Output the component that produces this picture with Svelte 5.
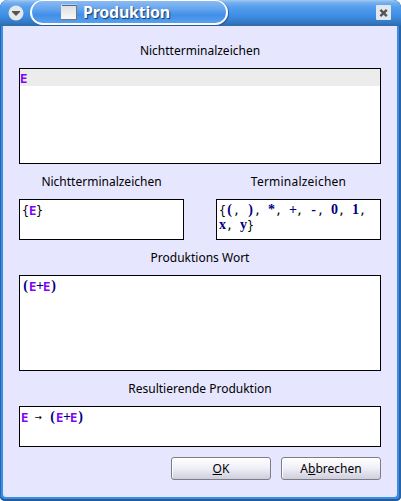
<script>
  const terminals = ['(', ')', '*', '+', '-', '0', '1', 'x', 'y'];
  const sep = ', ';
</script>

<div class="window">
  <header>
    <svg class="menu" width="16" height="16" viewBox="0 0 16 16">
      <circle cx="8" cy="8" r="7.5" fill="#e4e8ed" />
      <path d="M4 6h8v1l-4 4-4-4z" fill="#555" />
    </svg>
    <div class="tab">
      <svg class="doc" width="16" height="16" viewBox="0 0 16 16">
        <defs>
          <linearGradient id="paper" x1="0" y1="0" x2="0" y2="1">
            <stop offset="0" stop-color="#dcdcdc" />
            <stop offset="1" stop-color="#f8f8f8" />
          </linearGradient>
        </defs>
        <path d="M0 0h16v16H0z" fill="#777" />
        <path d="M0 0h15v15H0z" fill="url(#paper)" />
        <path d="M0 0h16v1H0z" fill="#b9cbe4" />
        <path d="M1 1h14v1H1z" fill="#47699c" />
      </svg>
      <span class="title">Produktion</span>
    </div>
    <svg class="close" width="15" height="15" viewBox="0 0 15 15">
      <rect width="15" height="15" rx="1" fill="#e1e7ee" />
      <path d="M4.4 4.8l6.4 6.4M10.8 4.8l-6.4 6.4" stroke="#555" stroke-width="2.4" />
    </svg>
  </header>

  <main>
    <div class="label first">Nichtterminalzeichen</div>
    <div class="box tall"><div class="selected"><b class="nt">E</b></div></div>
    <div class="pair">
      <section>
        <div class="label">Nichtterminalzeichen</div>
        <div class="box small pad"><i>{'{'}</i><b class="nt">E</b><i>{'}'}</i></div>
      </section>
      <section>
        <div class="label wide">Terminalzeichen</div>
        <div class="box small pad"><i>{'{'}</i>{#each terminals as t, n}{#if n}{sep}{/if}<b>{t}</b>{/each}<i>{'}'}</i></div>
      </section>
    </div>
    <div class="label next">Produktions Wort</div>
    <div class="box tall pad"><b>(</b><b class="nt">E</b><b>+</b><b class="nt">E</b><b>)</b></div>
    <div class="label next">Resultierende Produktion</div>
    <div class="box small result"><b class="nt">E</b> <i>→</i> <b>(</b><b class="nt">E</b><b>+</b><b class="nt">E</b><b>)</b></div>
    <footer>
      <button><u>O</u>K</button>
      <button>A<u>b</u>brechen</button>
    </footer>
  </main>
</div>

<style>
  .window {
    box-sizing: border-box;
    width: 401px;
    height: 501px;
    display: flex;
    flex-direction: column;
    overflow: hidden;
    border-radius: 8px 8px 5px 5px;
    background: #3b8de8;
    box-shadow: inset 1px 0 #2767ad, inset -2px 0 #2464a7, inset 0 -2px #1e5c9e;
    color: #000;
    font: 12px/16px "Noto Sans", sans-serif;
  }
  header {
    box-sizing: border-box;
    height: 26px;
    flex: none;
    display: flex;
    align-items: flex-start;
    padding: 0 10px 0 8px;
    background: linear-gradient(#a0c8f3 0, #72aeef 3px, #559eec 7px, #3d8de6 16px, #3477bf 23px, #3069a9 26px);
  }
  .menu { margin-top: 5px; }
  .close { margin: 5px 0 0 auto; }
  .tab {
    box-sizing: border-box;
    width: 198px;
    height: 25px;
    margin-left: 6px;
    border: 2px solid #fff;
    border-top-width: 1px;
    border-radius: 13px;
    display: flex;
    align-items: flex-start;
    padding-left: 29px;
    background: linear-gradient(#8bbaf2, #6ba8ef 7px, #408fe8 14px, #59a0ef 22px);
    box-shadow: 1px 1px 1px #245b99;
  }
  .doc { margin-top: 3px; }
  .title {
    margin: 1px 0 0 6px;
    color: #fff;
    font: bold 16px/20px "Noto Sans", sans-serif;
    letter-spacing: -0.25px;
    text-shadow: 1px 1px 1px #123c70;
    white-space: nowrap;
  }
  main {
    box-sizing: border-box;
    height: 471px;
    margin: 0 4px 4px 3px;
    padding: 0 16px;
    background: #e6e6ff;
    border-radius: 0 0 3px 3px;
  }
  .label {
    height: 16px;
    text-align: center;
    white-space: nowrap;
  }
  .wide { letter-spacing: 0.22px; }
  .first { padding: 17px 0 9px; }
  .next { padding: 10px 0 9px; }
  .box {
    box-sizing: border-box;
    border: 1px solid #000;
    background: #fff;
    font: 11.63px/15px "DejaVu Sans Mono", monospace;
    white-space: pre-wrap;
  }
  .tall { height: 96px; }
  .small { height: 41px; }
  .selected {
    box-sizing: border-box;
    height: 17px;
    padding: 2px 0 0;
    background: #ececec;
  }
  .pad { padding: 3px 2px; }
  .result { padding: 3px 1px; }
  b {
    display: inline-block;
    width: 7px;
    height: 15px;
    vertical-align: top;
    text-align: center;
    color: #000080;
    font: bold 14px/13px "Liberation Serif", serif;
  }
  .nt {
    color: #8000ff;
    font: bold 12.4px/15px "DejaVu Sans Mono", monospace;
  }
  i { font-style: normal; }
  .pair { display: flex; justify-content: space-between; padding-top: 10px; }
  .pair section { width: 165px; }
  .pair .label { padding-bottom: 9px; }
  footer { display: flex; justify-content: flex-end; gap: 10px; padding-top: 10px; }
  button {
    box-sizing: border-box;
    width: 100px;
    height: 23px;
    margin: 0;
    padding: 0;
    border: 1px solid #7d7d86;
    border-radius: 3px;
    background: linear-gradient(#fff, #efeff8 10px, #cfcfdc);
    box-shadow: inset 1px 1px #fff;
    color: #000;
    font: 12px/20px "Noto Sans", sans-serif;
  }
</style>
